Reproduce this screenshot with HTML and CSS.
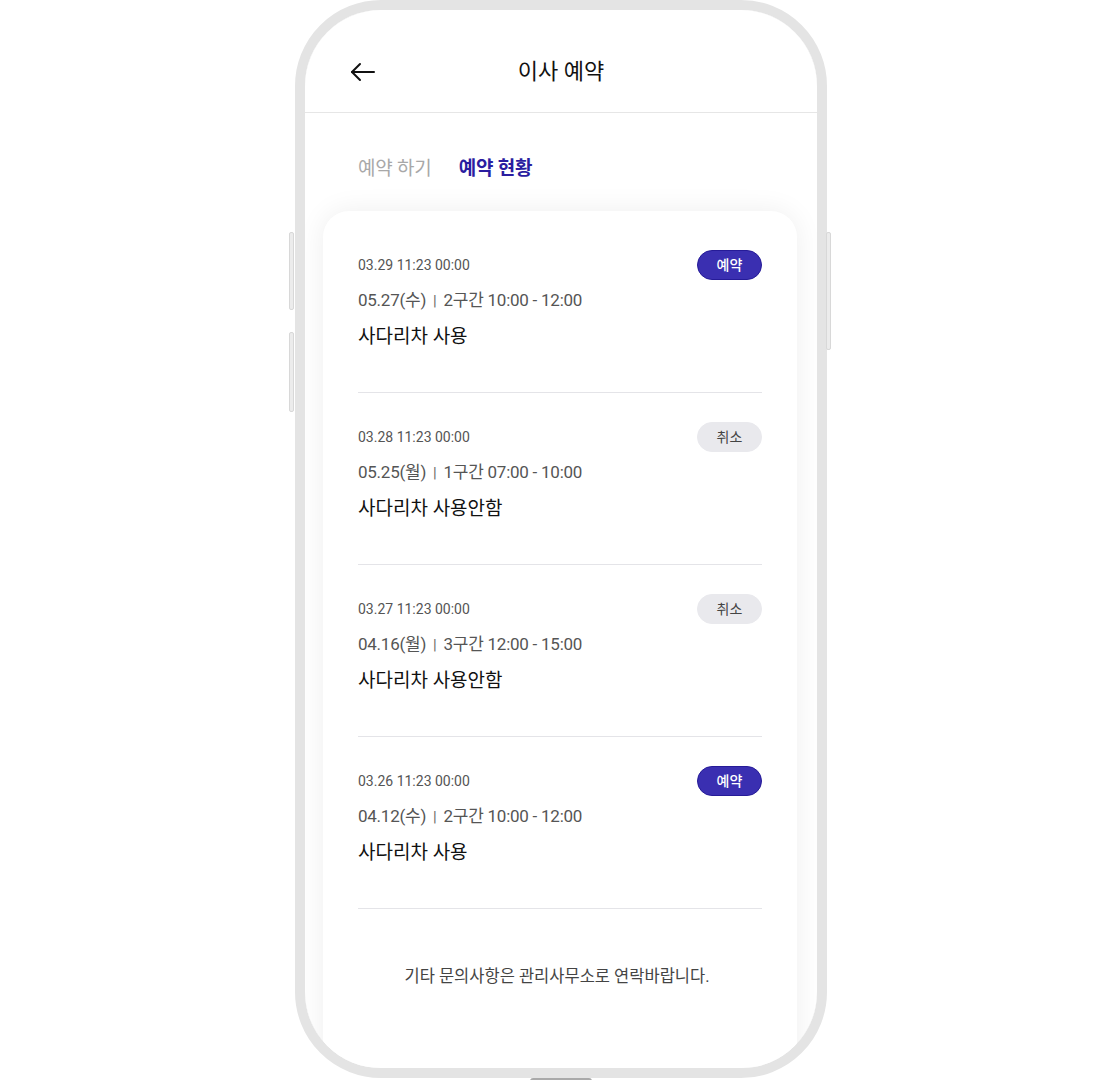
FILE: index.html
```html
<!DOCTYPE html>
<html lang="ko">
<head>
    <meta charset="UTF-8">
    <meta name="viewport" content="width=device-width, initial-scale=1.0">
    <title>이사 예약</title>
    <link rel="stylesheet" href="styles.css">
</head>
<body>
    <div class="phone">
        <span class="side-btn left-top"></span>
        <span class="side-btn left-bottom"></span>
        <span class="side-btn right"></span>
        <span class="home-bar"></span>

        <div class="screen">
            <header class="top-bar">
                <a class="back" href="#">
                    <svg width="26" height="20" viewBox="0 0 26 20" fill="none" stroke="#111" stroke-width="2" stroke-linecap="round" stroke-linejoin="round">
                        <path d="M24 10H2"/>
                        <path d="M10 2L2 10L10 18"/>
                    </svg>
                </a>
                <h1>이사 예약</h1>
            </header>

            <nav class="tabs">
                <a href="#">예약 하기</a>
                <a href="#" class="active">예약 현황</a>
            </nav>

            <div class="card">
                <div class="item">
                    <div class="item-head">
                        <span class="stamp">03.29 11:23 00:00</span>
                        <span class="badge reserved">예약</span>
                    </div>
                    <p class="slot">05.27(수)<span class="bar">|</span>2구간 10:00 - 12:00</p>
                    <p class="option">사다리차 사용</p>
                </div>
                <div class="item">
                    <div class="item-head">
                        <span class="stamp">03.28 11:23 00:00</span>
                        <span class="badge canceled">취소</span>
                    </div>
                    <p class="slot">05.25(월)<span class="bar">|</span>1구간 07:00 - 10:00</p>
                    <p class="option">사다리차 사용안함</p>
                </div>
                <div class="item">
                    <div class="item-head">
                        <span class="stamp">03.27 11:23 00:00</span>
                        <span class="badge canceled">취소</span>
                    </div>
                    <p class="slot">04.16(월)<span class="bar">|</span>3구간 12:00 - 15:00</p>
                    <p class="option">사다리차 사용안함</p>
                </div>
                <div class="item">
                    <div class="item-head">
                        <span class="stamp">03.26 11:23 00:00</span>
                        <span class="badge reserved">예약</span>
                    </div>
                    <p class="slot">04.12(수)<span class="bar">|</span>2구간 10:00 - 12:00</p>
                    <p class="option">사다리차 사용</p>
                </div>

                <p class="notice">기타 문의사항은 관리사무소로 연락바랍니다.</p>
            </div>
        </div>
    </div>
</body>
</html>
```

FILE: styles.css
```css
html, body {
    margin: 0;
    padding: 0;
    height: 100%;
}
body {
    background: #fff;
    font-family: Roboto, "Noto Sans CJK KR", sans-serif;
    overflow: hidden;
}
p {
    margin: 0;
}

/* device frame */
.phone {
    position: relative;
    width: 512px;
    height: 1058px;
    margin: 0 0 0 295px;
    border: 10px solid #e4e4e4;
    border-radius: 86px;
    box-shadow: inset 0 0 0 2px #dedede;
    background: #fff;
}
.screen {
    height: 100%;
    border-radius: 76px;
    overflow: hidden;
    background: #fff;
    display: flex;
    flex-direction: column;
}
.side-btn {
    position: absolute;
    width: 3px;
    border: 1px solid #d8d8d8;
    border-radius: 2px;
    background: #ececec;
}
.left-top {
    left: -16px;
    top: 222px;
    height: 76px;
}
.left-bottom {
    left: -16px;
    top: 322px;
    height: 78px;
}
.right {
    right: -14px;
    top: 222px;
    height: 116px;
}
.home-bar {
    position: absolute;
    left: 225px;
    bottom: -16px;
    width: 62px;
    height: 6px;
    border-radius: 3px;
    background: #a9a9a9;
}

/* header */
.top-bar {
    position: relative;
    height: 103px;
    box-sizing: border-box;
    padding: 47px 0 26px;
    border-bottom: 1px solid #e6e6e6;
    flex-shrink: 0;
}
.top-bar h1 {
    margin: 0;
    text-align: center;
    font-size: 22px;
    line-height: 30px;
    font-weight: 400;
    color: #111;
}
.back {
    position: absolute;
    left: 45px;
    top: 52px;
    display: block;
    line-height: 0;
}

/* tabs */
.tabs {
    display: flex;
    gap: 27px;
    padding: 43px 0 0 53px;
    flex-shrink: 0;
}
.tabs a {
    font-size: 19px;
    line-height: 26px;
    letter-spacing: -0.2px;
    color: #a8a8a8;
    text-decoration: none;
}
.tabs a.active {
    color: #2a1da0;
    font-weight: 700;
}

/* reservation list */
.card {
    margin: 29px 20px 0 18px;
    padding: 10px 35px 0;
    flex: 1;
    border-radius: 26px 26px 0 0;
    background: #fff;
    box-shadow: 0 0 28px rgba(0, 0, 0, 0.07);
}
.item {
    padding: 29px 0 42px;
    border-bottom: 1px solid #e4e4e8;
}
.item-head {
    display: flex;
    justify-content: space-between;
    align-items: center;
    height: 30px;
}
.stamp {
    font-size: 14px;
    color: #555;
}
.badge {
    width: 65px;
    height: 30px;
    box-sizing: border-box;
    border-radius: 15px;
    text-align: center;
    font-size: 14px;
    line-height: 28px;
}
.badge.reserved {
    background: #3a2fb1;
    border: 1px solid #261b98;
    color: #fff;
    font-weight: 500;
}
.badge.canceled {
    background: #e9e9ed;
    border: 1px solid #e9e9ed;
    color: #444;
}
.slot {
    margin-top: 8px;
    font-size: 17px;
    line-height: 24px;
    letter-spacing: -0.25px;
    color: #555;
}
.slot .bar {
    margin: 0 7px;
    font-size: 15px;
    color: #666;
}
.option {
    margin-top: 11px;
    font-size: 19px;
    line-height: 26px;
    font-weight: 400;
    color: #111;
}
.notice {
    margin-top: 56px;
    padding-right: 6px;
    text-align: center;
    font-size: 16.5px;
    line-height: 24px;
    color: #444;
}
```
